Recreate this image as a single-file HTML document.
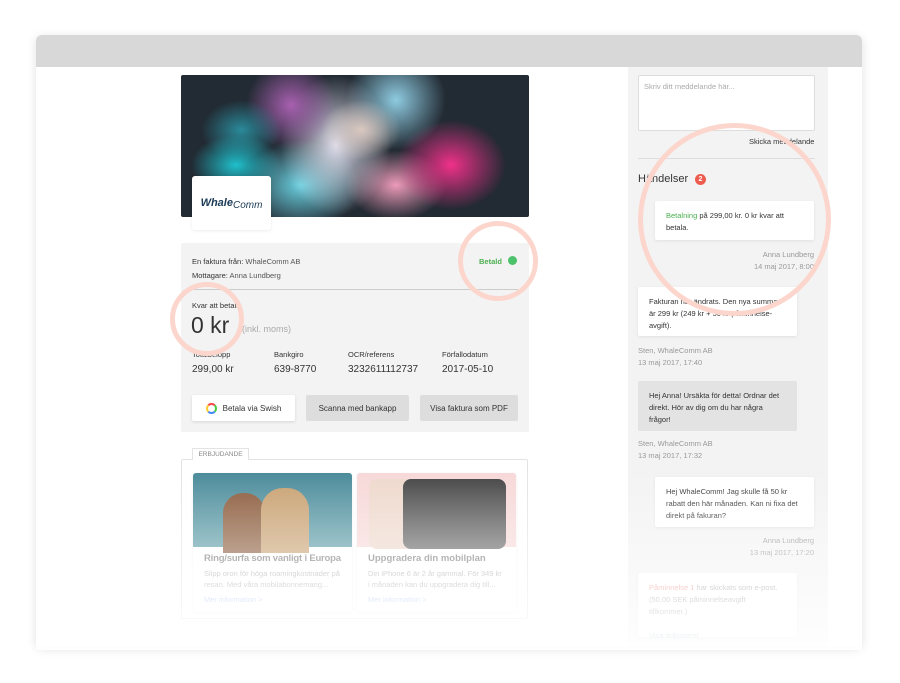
<!DOCTYPE html>
<html><head><meta charset="utf-8"><style>
*{margin:0;padding:0;box-sizing:border-box}
body{width:900px;height:683px;background:#fff;font-family:"Liberation Sans",sans-serif;position:relative;overflow:hidden;color:#333}
.a{position:absolute}
.win{left:36px;top:35px;width:826px;height:612px;background:#fff;border-radius:6px;box-shadow:0 2px 10px rgba(0,0,0,.12);overflow:hidden}
.bar{left:0;top:0;width:826px;height:32px;background:#d8d8d8}
.t{position:absolute;white-space:nowrap}
.btn{position:absolute;top:395px;height:26px;font-size:8px;display:flex;align-items:center;justify-content:center;border-radius:2px}
.ring{position:absolute;border:5px solid #fcd6cc;border-radius:50%}
.card{position:absolute;background:#fff;border-radius:3px;box-shadow:0 1px 3px rgba(0,0,0,.08)}
.msg{position:absolute;font-size:7.5px;line-height:12px;padding:9px 11px;border-radius:2px}
.meta{position:absolute;font-size:7.5px;color:#999;line-height:12px}
</style></head><body>
<div class="a win">
<div class="a bar"></div>
</div>
<!-- sidebar -->
<div class="a" style="left:628px;top:67px;width:200px;height:580px;background:#f3f3f3"></div>
<div class="a" style="left:638px;top:75px;width:177px;height:56px;background:#fff;border:1px solid #ddd;border-radius:2px"></div>
<div class="t" style="left:644px;top:82px;font-size:7.5px;color:#aaa">Skriv ditt meddelande här...</div>
<div class="t" style="left:749px;top:137px;font-size:7.5px;color:#333">Skicka meddelande</div>
<div class="a" style="left:638px;top:158px;width:177px;height:1px;background:#ddd"></div>
<div class="t" style="left:638px;top:173px;font-size:11px;color:#333">Händelser</div>
<div class="a" style="left:695px;top:174px;width:11px;height:11px;border-radius:50%;background:#ee5b4f;color:#fff;font-size:7px;text-align:center;line-height:11px;font-weight:bold">2</div>
<div class="card msg" style="left:655px;top:201px;width:159px;height:39px"><span style="color:#4caf50">Betalning</span> på 299,00 kr. 0 kr kvar att betala.</div>
<div class="meta" style="left:700px;top:249px;width:114px;text-align:right">Anna Lundberg<br>14 maj 2017, 8:00</div>
<div class="card msg" style="left:638px;top:287px;width:159px;height:49px">Fakturan har ändrats. Den nya summan är 299 kr (249 kr + 50 kr påminnelse-avgift).</div>
<div class="meta" style="left:638px;top:345px">Sten, WhaleComm AB<br>13 maj 2017, 17:40</div>
<div class="msg" style="left:638px;top:381px;width:159px;height:50px;background:#e3e3e3">Hej Anna! Ursäkta för detta! Ordnar det direkt. Hör av dig om du har några frågor!</div>
<div class="meta" style="left:638px;top:438px">Sten, WhaleComm AB<br>13 maj 2017, 17:32</div>
<div class="card msg" style="left:655px;top:477px;width:159px;height:50px">Hej WhaleComm! Jag skulle få 50 kr rabatt den här månaden. Kan ni fixa det direkt på fakuran?</div>
<div class="meta" style="left:700px;top:535px;width:114px;text-align:right">Anna Lundberg<br>13 maj 2017, 17:20</div>
<div class="card msg" style="left:638px;top:573px;width:159px;height:64px;color:#999"><span style="color:#f08a80">Påminnelse 1</span> har skickats som e-post. (50,00 SEK påminnelseavgift tillkommer.)<br><br><span style="color:#9ab">Visa dokument</span></div>

<!-- hero -->
<div class="a" style="left:181px;top:75px;width:348px;height:142px;background:#222a33;overflow:hidden;border-radius:2px">
<div class="a" style="left:0;top:0;width:348px;height:142px;background:
radial-gradient(ellipse 40px 30px at 180px 55px,#d9c8c0 0%,rgba(217,200,192,0) 100%),
radial-gradient(ellipse 45px 30px at 55px 90px,#1fc0cc 0%,rgba(31,192,204,0) 100%),
radial-gradient(ellipse 40px 30px at 60px 55px,#2a8a9a 0%,rgba(42,138,154,0) 100%),
radial-gradient(ellipse 45px 45px at 110px 30px,#a860b0 0%,rgba(168,96,176,0) 100%),
radial-gradient(ellipse 55px 70px at 155px 70px,#e0e0ee 0%,rgba(224,224,238,0) 100%),
radial-gradient(ellipse 50px 50px at 215px 25px,#8ecbe0 0%,rgba(142,203,224,0) 100%),
radial-gradient(ellipse 55px 45px at 270px 90px,#f0308a 0%,rgba(240,48,138,0) 100%),
radial-gradient(ellipse 50px 35px at 215px 110px,#ec9ab8 0%,rgba(236,154,184,0) 100%),
radial-gradient(ellipse 60px 45px at 120px 110px,#6ad0e0 0%,rgba(106,208,224,0) 100%)"></div>
</div>
<div class="card" style="left:192px;top:176px;width:79px;height:54px;display:flex;align-items:center;justify-content:center;color:#1a3a55;font-style:italic;font-weight:bold;font-size:11px">Whale<span style="font-weight:normal;font-size:10px;margin-top:4px">Comm</span></div>

<!-- info box -->
<div class="a" style="left:181px;top:243px;width:348px;height:189px;background:#f3f3f3;border-radius:2px"></div>
<div class="t" style="left:192px;top:257px;font-size:7.5px;color:#333">En faktura från: <span style="color:#555">WhaleComm AB</span></div>
<div class="t" style="left:192px;top:271px;font-size:7.5px;color:#333">Mottagare: <span style="color:#555">Anna Lundberg</span></div>
<div class="t" style="left:479px;top:257px;font-size:7.5px;color:#4caf50;font-weight:bold">Betald</div>
<div class="a" style="left:508px;top:256px;width:9px;height:9px;border-radius:50%;background:#4cc26a"></div>
<div class="a" style="left:192px;top:289px;width:326px;height:1px;background:#ccc"></div>
<div class="t" style="left:192px;top:301px;font-size:7.5px;color:#333">Kvar att betala</div>
<div class="t" style="left:191px;top:312px;font-size:23px;color:#333">0 kr</div>
<div class="t" style="left:242px;top:324px;font-size:9px;color:#aaa">(inkl. moms)</div>
<div class="t" style="left:192px;top:350px;font-size:7.5px;color:#333">Totalbelopp</div>
<div class="t" style="left:192px;top:364px;font-size:10px;color:#333">299,00 kr</div>
<div class="t" style="left:274px;top:350px;font-size:7.5px;color:#333">Bankgiro</div>
<div class="t" style="left:274px;top:364px;font-size:10px;color:#333">639-8770</div>
<div class="t" style="left:348px;top:350px;font-size:7.5px;color:#333">OCR/referens</div>
<div class="t" style="left:348px;top:364px;font-size:10px;color:#333">3232611112737</div>
<div class="t" style="left:442px;top:350px;font-size:7.5px;color:#333">Förfallodatum</div>
<div class="t" style="left:442px;top:364px;font-size:10px;color:#333">2017-05-10</div>
<div class="btn" style="left:192px;width:103px;background:#fff;box-shadow:0 1px 3px rgba(0,0,0,.12)"><span style="width:11px;height:11px;border-radius:50%;border:2px solid;border-color:#f44 #4c4 #48f #fc3;margin-right:6px"></span>Betala via Swish</div>
<div class="btn" style="left:306px;width:103px;background:#ddd">Scanna med bankapp</div>
<div class="btn" style="left:420px;width:98px;background:#ddd">Visa faktura som PDF</div>

<!-- offers -->
<div class="a" style="left:181px;top:459px;width:347px;height:160px;border:1px solid #e3e3e3;border-radius:2px"></div>
<div class="a" style="left:192px;top:448px;width:57px;height:12px;background:#fff;border:1px solid #e3e3e3;border-bottom:none;font-size:6.5px;color:#888;text-align:center;line-height:11px">ERBJUDANDE</div>
<div class="card" style="left:193px;top:473px;width:159px;height:139px;overflow:hidden">
<div style="height:74px;background:linear-gradient(180deg,#4a8a9a,#5a9aa5);position:relative">
<div class="a" style="left:30px;top:20px;width:42px;height:60px;border-radius:20px 20px 0 0;background:#8a5a3a"></div>
<div class="a" style="left:68px;top:15px;width:48px;height:65px;border-radius:22px 22px 0 0;background:#c8a070"></div></div>
<div style="padding:6px 11px 4px;font-size:9.5px;color:#777;font-weight:bold;white-space:nowrap;letter-spacing:-0.2px">Ring/surfa som vanligt i Europa</div>
<div style="padding:0 11px;font-size:7.5px;color:#aaa;line-height:11px">Slipp oron för höga roamingkostnader på resan. Med våra mobilabonnemang...</div>
<div style="padding:5px 11px;font-size:7.5px;color:#a8c4ee">Mer information &gt;</div></div>
<div class="card" style="left:357px;top:473px;width:159px;height:139px;overflow:hidden">
<div style="height:74px;background:#f7d8d8;position:relative">
<div class="a" style="left:12px;top:6px;width:60px;height:70px;border-radius:8px;background:#eed8cc"></div>
<div class="a" style="left:46px;top:6px;width:103px;height:70px;border-radius:8px;background:linear-gradient(#444,#666)"></div></div>
<div style="padding:6px 11px 4px;font-size:9.5px;color:#777;font-weight:bold;white-space:nowrap">Uppgradera din mobilplan</div>
<div style="padding:0 11px;font-size:7.5px;color:#aaa;line-height:11px">Din iPhone 6 är 2 år gammal. För 349 kr i månaden kan du uppgradera dig till...</div>
<div style="padding:5px 11px;font-size:7.5px;color:#a8c4ee">Mer information &gt;</div></div>

<!-- fade -->
<div class="a" style="left:36px;top:470px;width:826px;height:180px;background:linear-gradient(rgba(255,255,255,0),rgba(255,255,255,.92))"></div>

<!-- rings -->
<div class="ring" style="left:458px;top:221px;width:80px;height:80px"></div>
<div class="ring" style="left:170px;top:282px;width:74px;height:74px"></div>
<div class="ring" style="left:638px;top:123px;width:193px;height:193px"></div>
</body></html>
